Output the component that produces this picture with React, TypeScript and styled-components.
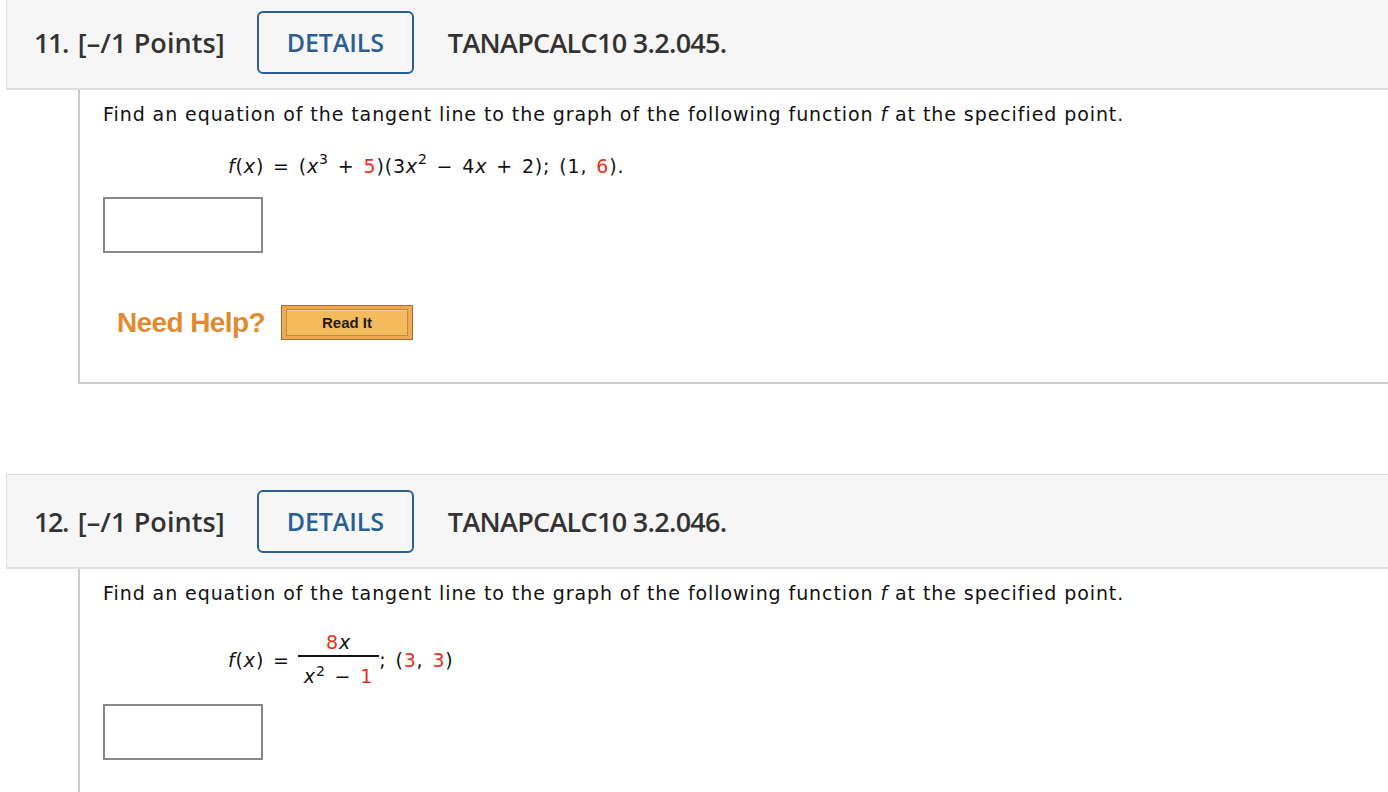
import React from "react";
import styled, { createGlobalStyle } from "styled-components";

const Global = createGlobalStyle`
  html, body { margin: 0; padding: 0; background: #fff; }
  body { width: 1388px; overflow: hidden; }
`;

const Page = styled.div`
  margin-top: -5px;
  padding-left: 6px;
  display: flex;
  flex-direction: column;
`;

const Question = styled.section<{ $gap?: number }>`
  display: flex;
  flex-direction: column;
  margin-bottom: ${(p) => p.$gap ?? 0}px;
`;

const Header = styled.div`
  box-sizing: border-box;
  height: 95px;
  margin-right: -20px;
  background: #f6f6f6;
  border: 1px solid #dedede;
  border-bottom-width: 2px;
  display: flex;
  align-items: center;
  padding-left: 27px;
  font-family: "Open Sans", sans-serif;
  font-weight: 600;
  color: #333;
`;

const QNum = styled.span`
  font-size: 27px;
  letter-spacing: -1.5px;
  margin-right: 10px;
`;

const Points = styled.span`
  font-size: 27px;
  letter-spacing: 0.1px;
`;

const DetailsButton = styled.button`
  box-sizing: border-box;
  width: 157px;
  height: 63px;
  margin-left: 32px;
  margin-right: 34px;
  border: 2px solid #2a5f95;
  border-radius: 6px;
  background: #f7f7f7;
  color: #2a5f95;
  font-family: "Open Sans", sans-serif;
  font-weight: 600;
  font-size: 25px;
  letter-spacing: -0.1px;
  padding: 0;
`;

const Code = styled.span`
  font-size: 27px;
  letter-spacing: -0.7px;
`;

const Body = styled.div<{ $open?: boolean }>`
  box-sizing: border-box;
  margin-left: 72px;
  margin-right: -20px;
  border-left: 2px solid #cccccc;
  border-bottom: ${(p) => (p.$open ? "none" : "2px solid #cccccc")};
  padding: 9px 0 0 23px;
  font-family: Verdana, "DejaVu Sans", sans-serif;
  color: #111;
  height: ${(p) => (p.$open ? "240px" : "294px")};
`;

const Prompt = styled.p`
  margin: 0;
  font-size: 19px;
  letter-spacing: 0.92px;
  line-height: 30px;
  white-space: nowrap;
`;

const Formula = styled.div<{ $top: number }>`
  margin: ${(p) => p.$top}px 0 0 125px;
  font-size: 19px;
  letter-spacing: 0.85px;
  word-spacing: 2px;
  line-height: 30px;
  display: flex;
  align-items: center;
  white-space: pre;
`;

const Red = styled.span`
  color: #e5321c;
`;

const I = styled.i`
  font-style: italic;
`;

const Sup = styled.sup`
  font-size: 14px;
  line-height: 0;
  vertical-align: 0;
  position: relative;
  top: -7px;
`;

const Frac = styled.span`
  display: inline-flex;
  flex-direction: column;
  align-items: center;
  margin: 0 0 0 8px;
`;

const NumPart = styled.span`
  line-height: 26px;
  padding: 0 6px;
`;

const Den = styled.span`
  line-height: 28px;
  padding: 5px 6px 0;
  border-top: 2px solid #111;
`;

const Answer = styled.input<{ $top: number }>`
  display: block;
  box-sizing: border-box;
  margin-top: ${(p) => p.$top}px;
  width: 160px;
  height: 56px;
  border: 2px solid #888;
  background: #fff;
  border-radius: 0;
  outline: none;
`;

const HelpRow = styled.div`
  display: flex;
  align-items: center;
  margin: 52px 0 0 14px;
  gap: 16px;
`;

const HelpLabel = styled.span`
  font-family: "Liberation Sans", Arial, sans-serif;
  font-weight: 700;
  font-size: 28px;
  color: #e28a30;
  letter-spacing: -0.6px;
`;

const ReadIt = styled.button`
  box-sizing: border-box;
  width: 132px;
  height: 35px;
  border: 1px solid #a86e2c;
  background: #f0a853;
  padding: 3px 4px;
  display: flex;
  cursor: pointer;
`;

const ReadItInner = styled.span`
  flex: 1;
  display: flex;
  align-items: center;
  justify-content: center;
  background: #f3bb5c;
  border: 1px solid #c08a44;
  box-shadow: inset 0 1px 0 #f8d394;
  font-family: "Liberation Sans", Arial, sans-serif;
  font-weight: 700;
  font-size: 15px;
  color: #1e1a12;
`;

const PROMPT =
  "Find an equation of the tangent line to the graph of the following function ";

export default function App() {
  return (
    <>
      <Global />
      <Page>
        <Question $gap={90}>
          <Header>
            <QNum>11.</QNum>
            <Points>[–/1 Points]</Points>
            <DetailsButton>DETAILS</DetailsButton>
            <Code>TANAPCALC10 3.2.045.</Code>
          </Header>
          <Body>
            <Prompt>
              {PROMPT}
              <I>f</I> at the specified point.
            </Prompt>
            <Formula $top={22}>
              <I>f</I>(<I>x</I>) = (<I>x</I>
              <Sup>3</Sup> + <Red>5</Red>)(3<I>x</I>
              <Sup>2</Sup> − 4<I>x</I> + 2); (1, <Red>6</Red>).
            </Formula>
            <Answer $top={16} aria-label="answer 11" />
            <HelpRow>
              <HelpLabel>Need Help?</HelpLabel>
              <ReadIt>
                <ReadItInner>Read It</ReadItInner>
              </ReadIt>
            </HelpRow>
          </Body>
        </Question>
        <Question>
          <Header>
            <QNum>12.</QNum>
            <Points>[–/1 Points]</Points>
            <DetailsButton>DETAILS</DetailsButton>
            <Code>TANAPCALC10 3.2.046.</Code>
          </Header>
          <Body $open>
            <Prompt>
              {PROMPT}
              <I>f</I> at the specified point.
            </Prompt>
            <Formula $top={21}>
              <I>f</I>(<I>x</I>) =
              <Frac>
                <NumPart>
                  <Red>8</Red>
                  <I>x</I>
                </NumPart>
                <Den>
                  <I>x</I>
                  <Sup>2</Sup> − <Red>1</Red>
                </Den>
              </Frac>
              ; (<Red>3</Red>, <Red>3</Red>)
            </Formula>
            <Answer $top={14} aria-label="answer 12" />
          </Body>
        </Question>
      </Page>
    </>
  );
}
